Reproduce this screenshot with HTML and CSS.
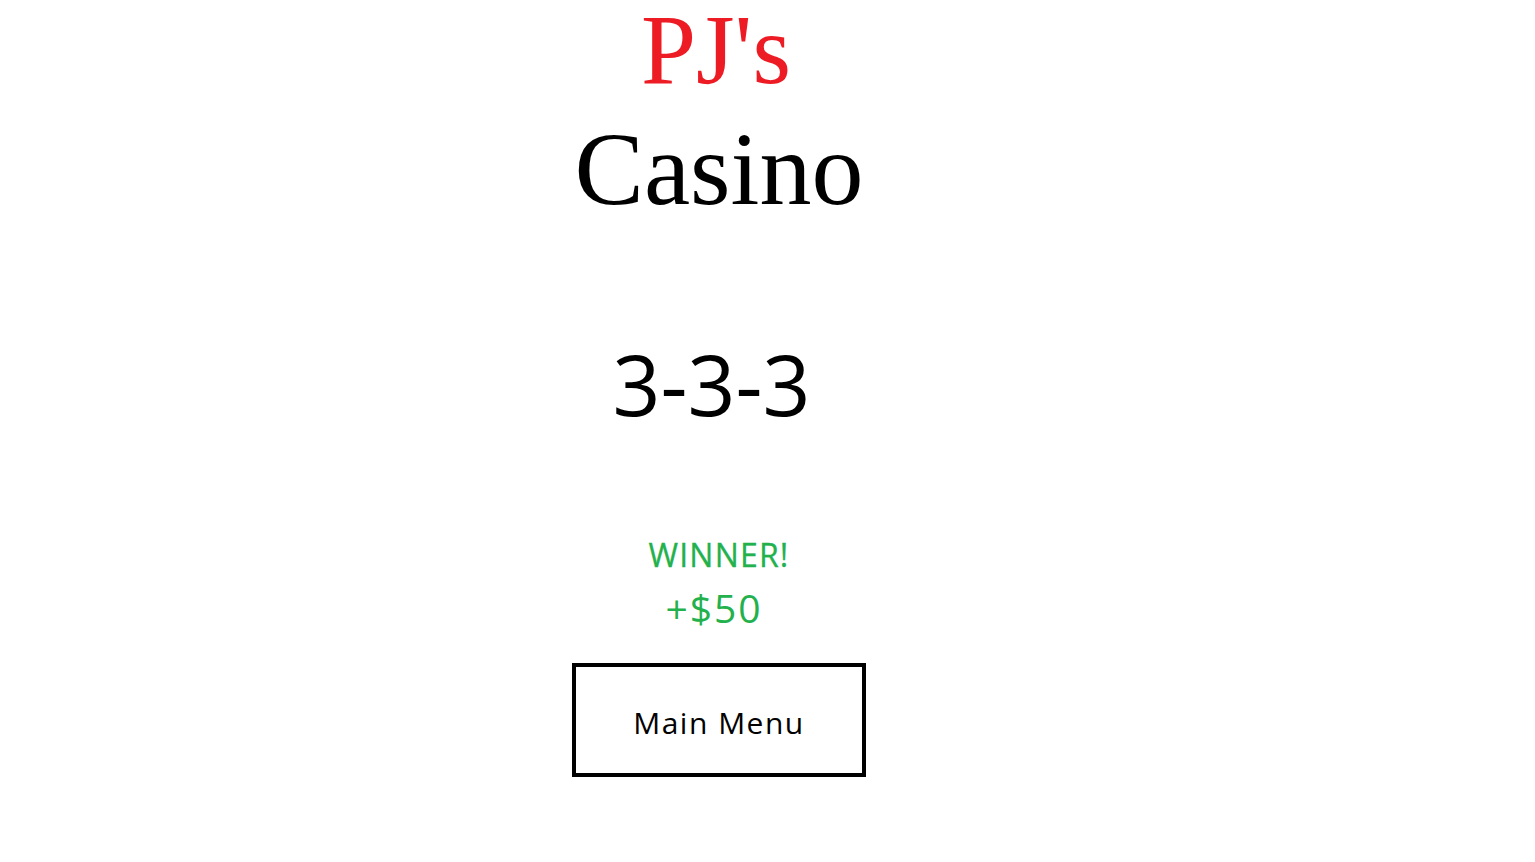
FILE: index.html
```html
<!DOCTYPE html>
<html>
<head>
<meta charset="utf-8">
<link rel="stylesheet" href="styles.css">
</head>
<body>
<main class="page">
  <h1 class="title">
    <span class="title-pj">PJ's</span>
    <span class="title-casino">Casino</span>
  </h1>
  <div class="result">3-3-3</div>
  <div class="winner">WINNER!</div>
  <div class="amount">+$50</div>
  <button class="menu-btn">Main Menu</button>
</main>
</body>
</html>
```
FILE: styles.css
```css
html, body {
  margin: 0;
  padding: 0;
  background: #ffffff;
}
.page {
  width: 1438px;
  display: flex;
  flex-direction: column;
  align-items: center;
  font-family: "Open Sans", "Noto Sans", sans-serif;
}
.title {
  margin: 0;
  display: flex;
  flex-direction: column;
  align-items: center;
  font-family: "Liberation Serif", "DejaVu Serif", serif;
  font-weight: normal;
}
.title-pj {
  color: #ed1c24;
  font-size: 99px;
  line-height: 112px;
  margin-top: -6px;
  padding-right: 6px;
}
.title-casino {
  margin-top: 4px;
  color: #000;
  font-size: 104px;
  line-height: 118px;
}
.result {
  margin-top: 106px;
  padding-right: 15px;
  font-size: 84px;
  line-height: 100px;
  color: #000;
}
.winner {
  margin-top: 101px;
  font-size: 32px;
  line-height: 40px;
  letter-spacing: 1.2px;
  color: #22b14c;
  -webkit-text-stroke: 0.3px #22b14c;
}
.amount {
  margin-top: 8px;
  font-size: 39px;
  line-height: 50px;
  letter-spacing: 2px;
  padding-right: 10px;
  color: #22b14c;
}
.menu-btn {
  margin-top: 30px;
  width: 294px;
  height: 114px;
  border: 4px solid #000;
  background: #fff;
  font-family: "Open Sans", "Noto Sans", sans-serif;
  font-size: 30px;
  letter-spacing: 1.5px;
  color: #000;
  padding: 4px 0 0;
}
```
